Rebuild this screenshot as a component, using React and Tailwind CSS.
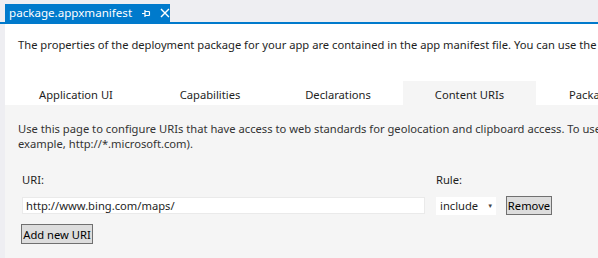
import React from 'react';

const tabs = [
  { label: 'Application UI', w: 'w-[142px] justify-center' },
  { label: 'Capabilities', w: 'w-[126px] justify-center' },
  { label: 'Declarations', w: 'w-[130px] justify-center' },
  { label: 'Content URIs', w: 'w-[133px] justify-center', active: true },
  { label: 'Packaging', w: 'w-[133px] pl-[33px]' },
];

export default function App() {
  return (
    <div className="w-[598px] h-[258px] overflow-hidden bg-[#eeeef2] text-[11.2px] text-[#1e1e1e] font-['Noto_Sans',sans-serif] leading-none">
      {/* document tab strip */}
      <div className="h-[22px] pt-[4px] pl-[5px] flex items-end">
        <div className="h-[18px] w-[165px] bg-[#007acc] text-white flex items-center pl-[4px] whitespace-nowrap">
          <span className="text-[11.6px]">package.appxmanifest</span>
          <svg className="ml-[9px]" width="10" height="10" viewBox="0 0 10 10" fill="none" stroke="white" strokeWidth="1.2">
            <path d="M1 5.5h3M4 2v7M4 3.5h4.5M4 7.5h4.5M8.5 3.5v4" />
          </svg>
          <svg className="ml-[9px]" width="10" height="10" viewBox="0 0 10 10" stroke="white" strokeWidth="1.4">
            <path d="M1 1l8 8M9 1l-8 8" />
          </svg>
        </div>
      </div>
      <div className="h-[2px] bg-[#007acc]" />

      <div className="ml-[5px] bg-white">
        <div className="h-[57px] pl-[13px] pt-[15px] whitespace-nowrap overflow-hidden">
          The properties of the deployment package for your app are contained in the app manifest file. You can use the Manifest Designer to set or modify one or more of the properties.
        </div>
        <div className="flex h-[24px] whitespace-nowrap">
          {tabs.map((t) => (
            <div
              key={t.label}
              className={`${t.w} shrink-0 flex items-center pt-[3px] ${t.active ? 'bg-[#f5f5f5]' : ''}`}
            >
              {t.label}
            </div>
          ))}
        </div>

        <div className="bg-[#f5f5f5] h-[160px] pl-[13px] pt-[16px]">
          <div className="leading-[15px] text-[#333] whitespace-nowrap overflow-hidden">
            Use this page to configure URIs that have access to web standards for geolocation and clipboard access. To use wildcards, add *. to a domain (for
            <br />
            example, http://*.microsoft.com).
          </div>
          <div className="flex mt-[23px]">
            <div className="w-[418px] pl-[4px]">URI:</div>
            <div>Rule:</div>
          </div>
          <div className="flex items-center mt-[11px] ml-[4px]">
            <div className="w-[403px] h-[17px] bg-white border border-[#eaeaea] flex items-center pl-[3px]">
              http://www.bing.com/maps/
            </div>
            <div className="ml-[11px] w-[60px] h-[18px] bg-white flex items-center pl-[4px]">
              include
              <span className="ml-[9px] text-[6px] text-[#444]">▼</span>
            </div>
            <div className="ml-[10px] h-[19px] w-[46px] justify-center bg-[#dddddd] border border-[#707070] flex items-center text-black">
              Remove
            </div>
          </div>
          <div className="mt-[9px] ml-[3px] inline-flex h-[20px] w-[72px] justify-center bg-[#dddddd] border border-[#707070] items-center text-black">
            Add new URI
          </div>
        </div>
      </div>
    </div>
  );
}
